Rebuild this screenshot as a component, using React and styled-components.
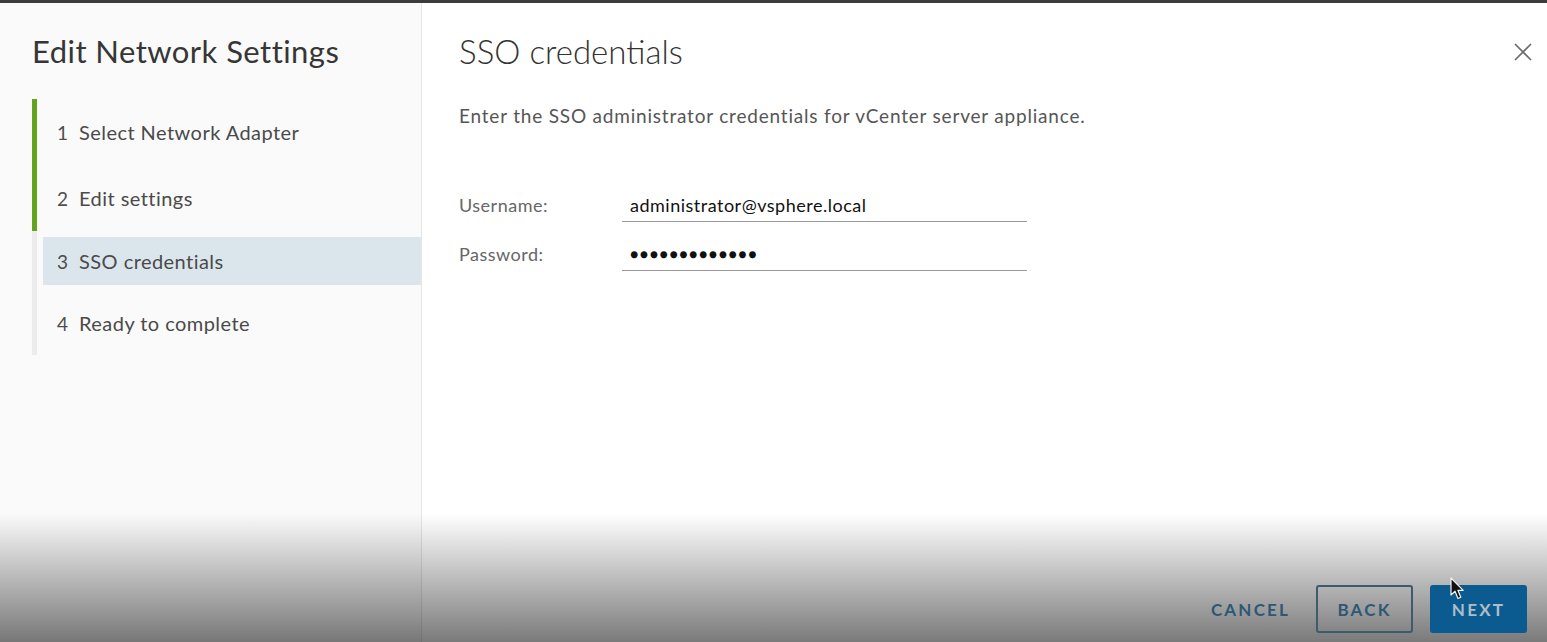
import React from "react";
import styled, { createGlobalStyle } from "styled-components";

const GlobalStyle = createGlobalStyle`
  html, body {
    margin: 0;
    padding: 0;
    overflow: hidden;
    background: #ffffff;
  }
  * {
    box-sizing: border-box;
  }
`;

const steps = [
  { n: 1, label: "Select Network Adapter", state: "done" },
  { n: 2, label: "Edit settings", state: "done" },
  { n: 3, label: "SSO credentials", state: "current" },
  { n: 4, label: "Ready to complete", state: "todo" },
];

const App = () => {
  return (
    <>
      <GlobalStyle />
      <Frame>
        <Sidebar>
          <SideTitle>Edit Network Settings</SideTitle>
          <StepList>
            {steps.map((s) => (
              <StepRow key={s.n} state={s.state}>
                <StepItem active={s.state === "current"}>
                  <StepNum>{s.n}</StepNum>
                  <StepLabel>{s.label}</StepLabel>
                </StepItem>
              </StepRow>
            ))}
          </StepList>
        </Sidebar>

        <Main>
          <Header>
            <PageTitle>SSO credentials</PageTitle>
            <CloseBtn aria-label="close">
              <svg width="18" height="18" viewBox="0 0 18 18">
                <path
                  d="M1 1 L17 17 M17 1 L1 17"
                  stroke="#6b6b6b"
                  strokeWidth="1.6"
                  fill="none"
                />
              </svg>
            </CloseBtn>
          </Header>
          <Description>
            Enter the SSO administrator credentials for vCenter server
            appliance.
          </Description>
          <Form>
            <FieldLabel>Username:</FieldLabel>
            <FieldInput type="text" defaultValue="administrator@vsphere.local" />
            <FieldLabel>Password:</FieldLabel>
            <FieldInput password type="text" defaultValue={"\u25CF".repeat(13)} />
          </Form>
          <Footer>
            <FlatButton>CANCEL</FlatButton>
            <OutlineButton>BACK</OutlineButton>
            <PrimaryButton>NEXT</PrimaryButton>
          </Footer>
        </Main>

        <Shade />
        <Cursor width="16" height="24" viewBox="0 0 16 24">
          <path
            d="M1 1 L1 18 L5 14.2 L8 21.5 L10.8 20.3 L7.9 13.3 L13.2 13.3 Z"
            fill="#111"
            stroke="#f2f2f2"
            strokeWidth="1.2"
            strokeLinejoin="round"
          />
        </Cursor>
      </Frame>
    </>
  );
};

const Frame = styled.div`
  position: relative;
  display: flex;
  width: 100%;
  height: 642px;
  border-top: 3px solid #3c3c3c;
  font-family: "Lato", "Liberation Sans", sans-serif;
  overflow: hidden;
`;

const Sidebar = styled.div`
  width: 422px;
  flex-shrink: 0;
  background: #fafafa;
  border-right: 1px solid #e6e6e6;
  padding: 30px 0 0 32px;
`;

const SideTitle = styled.h2`
  margin: 0;
  font-size: 31px;
  font-weight: 400;
  color: #363636;
  line-height: 36px;
  letter-spacing: 0.45px;
`;

const StepList = styled.div`
  margin-top: 30px;
  display: flex;
  flex-direction: column;
`;

const StepRow = styled.div`
  height: ${(p) => (p.state === "done" ? "66px" : "62px")};
  padding: ${(p) => (p.state === "done" ? "9px 0 9px 6px" : "6px 0 8px 6px")};
  border-left: 5px solid
    ${(p) => (p.state === "done" ? "#62a420" : "#ececec")};
`;

const StepItem = styled.div`
  display: flex;
  align-items: center;
  height: 100%;
  padding-left: 14px;
  background: ${(p) => (p.active ? "#dbe5ec" : "transparent")};
`;

const StepNum = styled.span`
  width: 22px;
  font-size: 19px;
  color: #4e4e4e;
`;

const StepLabel = styled.span`
  font-size: 20px;
  letter-spacing: 0.45px;
  color: #4a4a4a;
`;

const Main = styled.div`
  flex: 1;
  display: flex;
  flex-direction: column;
  padding: 29px 15px 9px 37px;
  background: #ffffff;
`;

const Header = styled.div`
  display: flex;
  justify-content: space-between;
  align-items: flex-start;
`;

const PageTitle = styled.h1`
  margin: 0;
  font-size: 33px;
  font-weight: 300;
  color: #333;
  line-height: 38px;
`;

const CloseBtn = styled.button`
  all: unset;
  margin-top: 11px;
  width: 18px;
  height: 18px;
  display: flex;
`;

const Description = styled.p`
  margin: 34px 0 0;
  font-size: 19px;
  letter-spacing: 0.8px;
  color: #565656;
  line-height: 24px;
`;

const Form = styled.div`
  margin-top: 52px;
  display: grid;
  grid-template-columns: 163px 405px;
  grid-auto-rows: 49px;
  align-items: center;
`;

const FieldLabel = styled.label`
  font-size: 18px;
  letter-spacing: 0.5px;
  color: #666;
`;

const FieldInput = styled.input`
  all: unset;
  box-sizing: border-box;
  height: 31px;
  padding: 0 8px 2px;
  font-family: "Lato", "Liberation Sans", sans-serif;
  font-size: ${(p) => (p.password ? "14px" : "18px")};
  letter-spacing: ${(p) => (p.password ? "1.45px" : "0.5px")};
  color: #111;
  border-bottom: 1px solid #9a9a9a;
  margin-top: 3px;
`;

const Footer = styled.div`
  position: relative;
  z-index: 2;
  margin-top: auto;
  display: flex;
  justify-content: flex-end;
  gap: 17px;
  padding-right: 5px;
`;

const BaseButton = styled.button`
  all: unset;
  box-sizing: border-box;
  width: 97px;
  height: 48px;
  display: flex;
  align-items: center;
  justify-content: center;
  font-family: "Lato", "Liberation Sans", sans-serif;
  font-size: 17px;
  font-weight: 700;
  letter-spacing: 2.2px;
  border-radius: 3px;
`;

const FlatButton = styled(BaseButton)`
  color: #2d5875;
`;

const OutlineButton = styled(BaseButton)`
  color: #2d5875;
  border: 2px solid #3e5a6d;
`;

const PrimaryButton = styled(BaseButton)`
  background: #0b5b90;
  color: #aebdc8;
`;

const Shade = styled.div`
  position: absolute;
  left: 0;
  right: 0;
  top: 510px;
  bottom: 0;
  z-index: 1;
  pointer-events: none;
  background: linear-gradient(
    to bottom,
    rgba(0, 0, 0, 0) 0%,
    rgba(0, 0, 0, 0.06) 12%,
    rgba(0, 0, 0, 0.52) 100%
  );
`;

const Cursor = styled.svg`
  position: absolute;
  left: 1450px;
  top: 574px;
  z-index: 3;
`;

export default App;
